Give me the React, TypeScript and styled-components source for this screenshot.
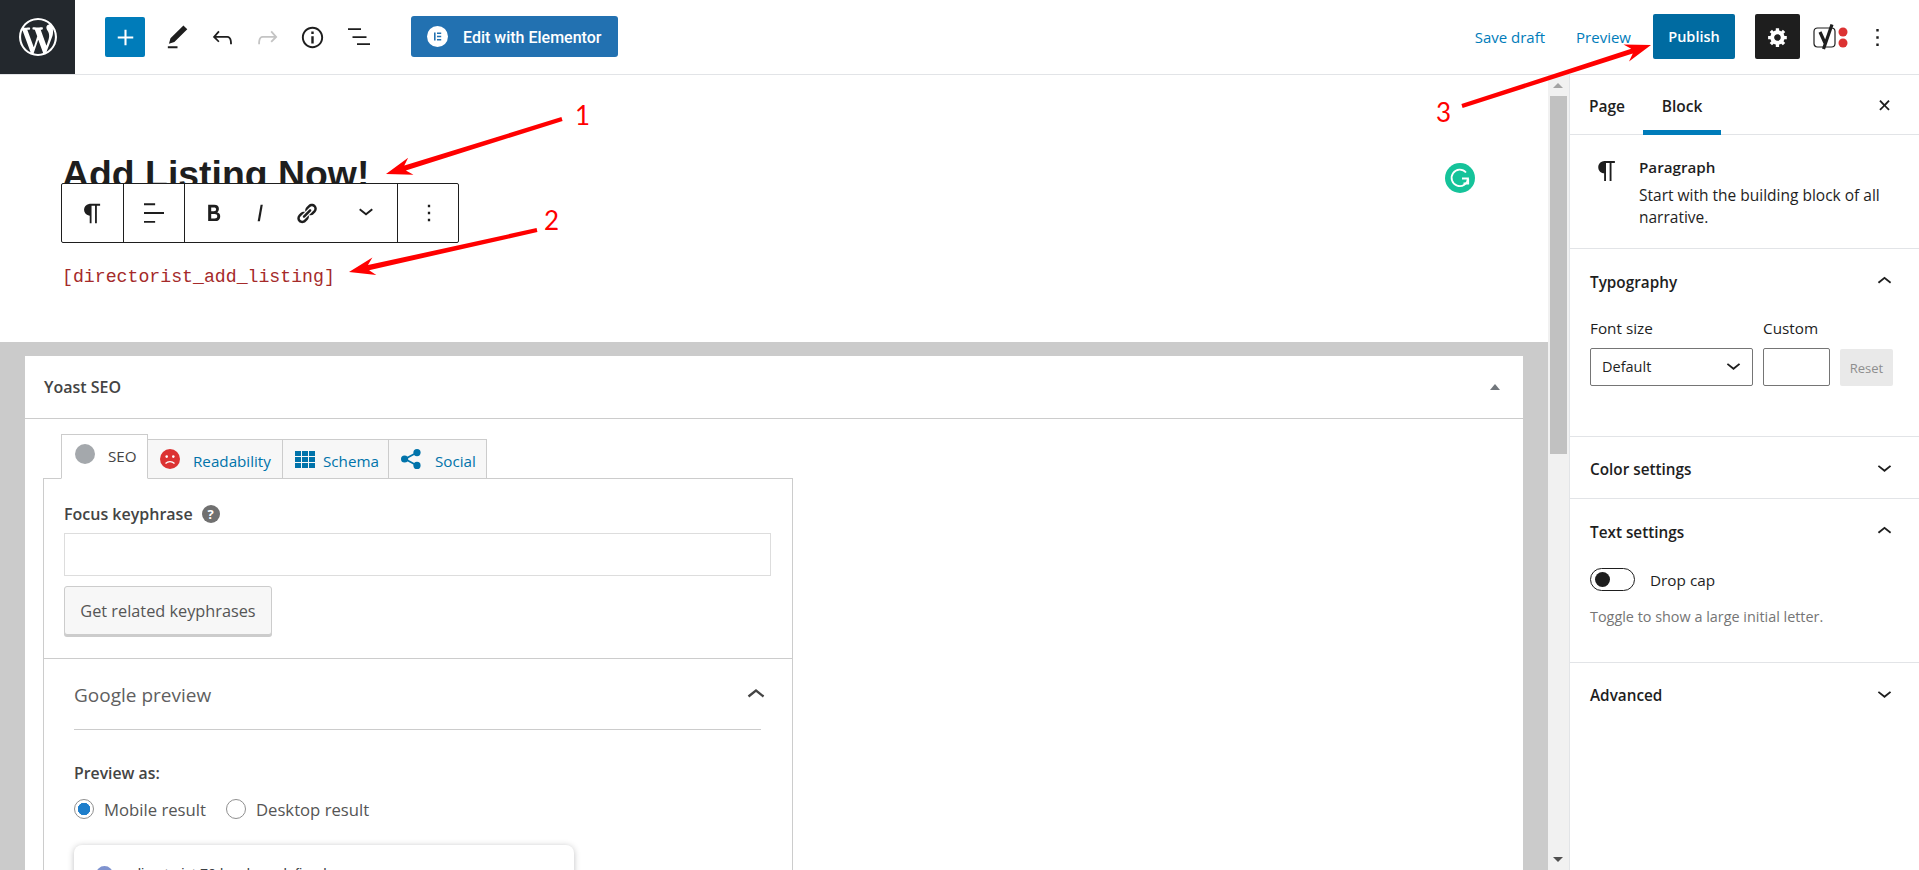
import React from "react";
import styled, { createGlobalStyle } from "styled-components";

const GlobalStyle = createGlobalStyle`
  html, body { margin: 0; padding: 0; background: #fff; }
  body { font-family: "Open Sans", "Noto Sans", sans-serif; color: #1e1e1e; }
  * { box-sizing: border-box; }
`;

const paths = {
  logo: "M20 10c0-5.51-4.49-10-10-10C4.48 0 0 4.49 0 10c0 5.52 4.48 10 10 10 5.51 0 10-4.48 10-10zM7.78 15.37L4.37 6.22c.55-.02 1.17-.08 1.17-.08.5-.06.44-1.13-.06-1.11 0 0-1.45.11-2.37.11-.18 0-.37 0-.58-.01C4.12 2.69 6.87 1.11 10 1.11c2.33 0 4.45.87 6.05 2.34-.68-.11-1.65.39-1.65 1.58 0 .74.45 1.36.9 2.1.35.61.55 1.36.55 2.46 0 1.49-1.4 5-1.4 5l-3.03-8.37c.54-.02.82-.17.82-.17.5-.05.44-1.25-.06-1.22 0 0-1.44.12-2.38.12-.87 0-2.33-.12-2.33-.12-.5-.03-.56 1.2-.06 1.22l.92.08 1.26 3.41zM17.41 10c.24-.64.74-1.87.43-4.25.7 1.29 1.05 2.71 1.05 4.25 0 3.29-1.73 6.24-4.4 7.78.97-2.59 1.94-5.2 2.92-7.78zM6.1 18.09C3.12 16.65 1.11 13.53 1.11 10c0-1.3.23-2.48.72-3.59C3.25 10.3 4.67 14.2 6.1 18.09zm4.03-6.63l2.58 6.98c-.86.29-1.76.45-2.71.45-.79 0-1.57-.11-2.29-.33.81-2.38 1.62-4.74 2.42-7.1z",
  plus: "M18 11.2h-5.2V6h-1.6v5.2H6v1.6h5.2V18h1.6v-5.2H18z",
  pencil: "M20.1 5.1L16.9 2 6.2 12.7l-1.3 4.4 4.5-1.3L20.1 5.1zM4 20.8h8v-1.5H4v1.5z",
  undo: "M18.3 11.7c-.6-.6-1.4-.9-2.3-.9H6.7l2.9-3.3-1.1-1-4.5 5L8.5 16l1-1-2.7-2.7H16c.5 0 .9.2 1.3.5 1 1 1 3.4 1 4.5v.3h1.5v-.2c0-1.5 0-4.3-1.5-5.7z",
  redo: "M15.6 6.5l-1.1 1 2.9 3.3H8c-.9 0-1.7.3-2.3.9-1.4 1.5-1.4 4.2-1.4 5.6v.2h1.5v-.3c0-1.1 0-3.5 1-4.5.3-.3.7-.5 1.3-.5h9.2L14.5 15l1.1 1.1 4.6-4.6-4.6-5z",
  info: "M12 3.2c-4.8 0-8.8 3.9-8.8 8.8 0 4.8 3.9 8.8 8.8 8.8 4.8 0 8.8-3.9 8.8-8.8 0-4.8-4-8.8-8.8-8.8zm0 16c-4 0-7.2-3.3-7.2-7.2C4.8 8 8 4.8 12 4.8s7.2 3.3 7.2 7.2c0 4-3.2 7.2-7.2 7.2zM11 17h2v-6h-2v6zm0-8h2V7h-2v2z",
  list: "M2 3.2h13V5H2zM6.5 11.2h14V13h-14zM11 18.2h13V20H11z",
  gear: "M18 12h-2.18c-.17.7-.44 1.35-.81 1.93l1.54 1.54-2.1 2.1-1.54-1.54c-.58.36-1.23.63-1.91.79V19H8v-2.18c-.68-.16-1.33-.43-1.91-.79l-1.54 1.54-2.12-2.12 1.54-1.54c-.36-.58-.63-1.23-.79-1.91H1V9.03h2.17c.16-.7.44-1.35.8-1.94L2.43 5.55l2.1-2.1 1.54 1.54c.58-.37 1.24-.64 1.93-.81V2h3v2.18c.68.16 1.33.43 1.91.79l1.54-1.54 2.12 2.12-1.54 1.54c.36.59.64 1.24.8 1.94H18V12zm-8.5 1.5c1.66 0 3-1.34 3-3s-1.34-3-3-3-3 1.34-3 3 1.34 3 3 3z",
  more: "M13 19h-2v-2h2v2zm0-6h-2v-2h2v2zm0-6h-2V5h2v2z",
  down: "M17.5 9.6L12 14l-5.5-4.4.9-1.2L12 12l4.5-3.6 1 1.2z",
  up: "M6.5 12.4L12 8l5.5 4.4-.9 1.2L12 10l-4.5 3.6-1-1.2z",
  close: "M13 11.9l3.3-3.4-1.1-1-3.2 3.3-3.2-3.3-1.1 1 3.3 3.4-3.3 3.3 1.1 1 3.2-3.3 3.2 3.3 1.1-1z",
  pilcrow: "M18.3 4H9.9v-.1l-.9.2c-2.3.4-4 2.4-4 4.8s1.7 4.4 4 4.8l.7.1V20h1.5V5.5h2.9V20h1.5V5.5h2.7V4z",
  align: "M4 19.8h8.9v-1.5H4v1.5zm8.9-15.6H4v1.5h8.9V4.2zm-8.9 7v1.5h16v-1.5H4z",
  bold: "M14.7 11.3c1-.6 1.5-1.6 1.5-3 0-2.3-1.3-3.4-4-3.4H7v14h5.8c1.4 0 2.5-.3 3.3-1 .8-.7 1.2-1.7 1.2-2.9.1-1.9-.8-3.1-2.6-3.7zm-5.1-4h2.3c.6 0 1.1.1 1.4.4.3.3.5.7.5 1.2s-.2 1-.5 1.2c-.3.3-.8.4-1.4.4H9.6V7.3zm4.6 9c-.4.3-1 .4-1.7.4H9.6v-3.9h2.9c.7 0 1.3.2 1.7.5.4.3.6.8.6 1.5s-.2 1.2-.6 1.5z",
  italic: "M12.5 5L10 19h1.9l2.5-14z",
  link: "M17.74 2.76c1.68 1.69 1.68 4.41 0 6.1l-1.53 1.52c-1.12 1.12-2.7 1.47-4.14 1.09l2.62-2.61.76-.77.76-.76c.84-.84.84-2.2 0-3.04-.84-.85-2.2-.85-3.04 0l-.77.76-3.38 3.38c-.37-1.44-.02-3.02 1.1-4.14l1.52-1.53c1.69-1.68 4.42-1.68 6.1 0zM8.59 13.43l5.34-5.34c.42-.42.42-1.1 0-1.52-.44-.43-1.13-.39-1.53 0l-5.33 5.34c-.42.42-.42 1.1 0 1.52.44.43 1.13.39 1.52 0zm-.76 2.29l4.14-4.15c.38 1.44.03 3.02-1.09 4.14l-1.52 1.53c-1.69 1.68-4.41 1.68-6.1 0-1.68-1.68-1.68-4.42 0-6.1l1.53-1.52c1.12-1.12 2.7-1.47 4.14-1.1l-4.14 4.15c-.85.84-.85 2.2 0 3.05.84.84 2.2.84 3.04 0z",
};

const Icon = ({ name, size = 29, box = 24, color = "currentColor" }: { name: keyof typeof paths; size?: number; box?: number; color?: string }) => (
  <svg width={size} height={size} viewBox={`0 0 ${box} ${box}`} fill={color} style={{ display: "block", flex: "none" }}>
    <path d={paths[name]} />
  </svg>
);

const Page = styled.div`
  position: relative;
  width: 1919px;
  height: 870px;
  overflow: hidden;
  display: flex;
  flex-direction: column;
  font-size: 13px;
`;

/* top bar */
const TopBar = styled.header`
  height: 75px;
  flex: none;
  display: flex;
  align-items: flex-start;
  border-bottom: 1px solid #e2e4e7;
`;
const LogoBox = styled.div`
  width: 75px;
  height: 74px;
  background: #23282d;
  color: #fff;
  display: flex;
  align-items: center;
  justify-content: center;
`;
const LeftTools = styled.div`
  height: 74px;
  display: flex;
  align-items: center;
  padding-left: 30px;
`;
const AddButton = styled.div`
  width: 40px;
  height: 40px;
  border-radius: 2px;
  background: #007cba;
  color: #fff;
  display: flex;
  align-items: center;
  justify-content: center;
  margin-right: 10px;
`;
const ToolIcon = styled.div<{ $muted?: boolean }>`
  width: 45px;
  height: 40px;
  display: flex;
  align-items: center;
  justify-content: center;
  color: ${(p) => (p.$muted ? "#c4c4c4" : "#1e1e1e")};
`;
const ElementorButton = styled.div`
  margin-left: 31px;
  margin-top: -2px;
  width: 207px;
  height: 41px;
  padding-left: 16px;
  border-radius: 3px;
  background: #2271b1;
  color: #fff;
  display: flex;
  align-items: center;
  gap: 15px;
  font-family: Roboto, sans-serif;
  font-size: 16px;
  font-weight: 500;
`;
const ElementorLabel = styled.span`
  margin-top: 3px;
`;
const RightTools = styled.div`
  height: 74px;
  margin-left: auto;
  display: flex;
  align-items: center;
`;
const TextLink = styled.span<{ $gap: number }>`
  color: #007cba;
  font-size: 15px;
  margin-right: ${(p) => p.$gap}px;
`;
const PublishButton = styled.div`
  width: 82px;
  height: 45px;
  margin-right: 20px;
  margin-top: -1px;
  border-radius: 2px;
  background: #006ba1;
  color: #fff;
  font-size: 14.5px;
  font-weight: 600;
  display: flex;
  align-items: center;
  justify-content: center;
`;
const SettingsButton = styled.div`
  width: 45px;
  height: 45px;
  margin-top: -1px;
  border-radius: 2px;
  background: #1e1e1e;
  color: #fff;
  display: flex;
  align-items: center;
  justify-content: center;
`;
const YoastSlot = styled.div`
  margin-left: 13px;
  width: 37px;
  height: 26px;
`;
const MoreSlot = styled.div`
  width: 29px;
  margin: 0 27px 0 13px;
`;

/* main area */
const Body = styled.div`
  flex: 1;
  min-height: 0;
  display: flex;
`;
const EditorColumn = styled.main`
  width: 1548px;
  flex: none;
  display: flex;
  flex-direction: column;
  background: #cbcbcb;
`;
const Canvas = styled.section`
  position: relative;
  height: 267px;
  flex: none;
  background: #fff;
  padding: 77px 0 0 62px;
`;
const PostTitle = styled.h1`
  margin: 0;
  font-family: "Liberation Sans", Arial, sans-serif;
  font-size: 37.4px;
  font-weight: 700;
  line-height: 44px;
  color: #1e1e1e;
`;
const BlockToolbar = styled.div`
  position: absolute;
  left: 61px;
  top: 108px;
  width: 398px;
  height: 60px;
  display: flex;
  background: #fff;
  border: 1px solid #1e1e1e;
  border-radius: 2px;
`;
const ToolbarGroup = styled.div<{ $width: number }>`
  width: ${(p) => p.$width}px;
  flex: none;
  display: flex;
  align-items: center;
  justify-content: center;
  border-right: 1px solid #1e1e1e;
  &:last-child { border-right: none; }
`;
const FormatGroup = styled(ToolbarGroup)`
  justify-content: flex-start;
  padding-left: 6px;
`;
const FormatButton = styled.div<{ $offset?: number }>`
  width: 46px;
  display: flex;
  justify-content: center;
  margin-left: ${(p) => p.$offset ?? 0}px;
`;
const Shortcode = styled.p`
  margin: 0;
  position: absolute;
  left: 62px;
  top: 190px;
  font-family: "Liberation Mono", monospace;
  font-size: 18.2px;
  line-height: 24px;
  color: #a52a2a;
`;
const GrammarlyBadge = styled.div`
  position: absolute;
  left: 1445px;
  top: 88px;
  width: 30px;
  height: 30px;
`;

/* yoast box */
const GreyGutter = styled.div`
  flex: 1;
  min-height: 0;
  padding: 14px 25px 0;
  overflow: hidden;
`;
const Metabox = styled.section`
  height: 600px;
  background: #fff;
`;
const MetaHeader = styled.div`
  height: 63px;
  padding: 0 19px;
  display: flex;
  align-items: center;
  justify-content: space-between;
  border-bottom: 1px solid #ccc;
  color: #444;
  font-size: 16px;
  font-weight: 600;
`;
const SortCaret = styled.span`
  width: 0;
  height: 0;
  margin-right: 4px;
  border-left: 5px solid transparent;
  border-right: 5px solid transparent;
  border-bottom: 6px solid #72777c;
`;
const TabRow = styled.div`
  height: 59px;
  padding-left: 37px;
  display: flex;
  align-items: flex-end;
`;
const Tab = styled.div<{ $active?: boolean; $width: number; $gap?: number }>`
  width: ${(p) => p.$width}px;
  height: ${(p) => (p.$active ? 45 : 40)}px;
  margin-bottom: -1px;
  margin-left: -1px;
  padding: ${(p) => (p.$active ? "0 0 5px 13px" : "0 0 0 12px")};
  display: flex;
  align-items: center;
  gap: ${(p) => p.$gap ?? 13}px;
  position: relative;
  z-index: ${(p) => (p.$active ? 1 : 0)};
  background: ${(p) => (p.$active ? "#fff" : "#f7f7f7")};
  border: 1px solid #ccc;
  border-bottom-color: ${(p) => (p.$active ? "#fff" : "#ccc")};
  color: ${(p) => (p.$active ? "#444" : "#0073aa")};
  font-size: 15.2px;
`;
const TabLabel = styled.span`
  margin-top: 3px;
`;
const TabPanel = styled.div`
  width: 750px;
  margin-left: 18px;
  height: 460px;
  border: 1px solid #ccc;
`;
const FocusSection = styled.div`
  height: 180px;
  padding: 24px 20px 0;
  border-bottom: 1px solid #ccc;
`;
const FieldLabel = styled.div`
  display: flex;
  align-items: center;
  gap: 9px;
  height: 22px;
  color: #444;
  font-size: 16px;
  font-weight: 600;
`;
const TextField = styled.div`
  width: 707px;
  height: 43px;
  margin-top: 8px;
  border: 1px solid #ddd;
`;
const GreyButton = styled.div`
  width: 208px;
  height: 49px;
  margin-top: 10px;
  display: flex;
  align-items: center;
  justify-content: center;
  background: #f7f7f7;
  border: 1px solid #ccc;
  border-radius: 3px;
  box-shadow: 0 2px 0 #ccc;
  color: #555;
  font-size: 16.3px;
`;
const PreviewSection = styled.div`
  padding: 0 31px 0 30px;
`;
const PreviewHeading = styled.div`
  height: 71px;
  padding: 2px 0 0;
  display: flex;
  align-items: center;
  justify-content: space-between;
  border-bottom: 1px solid #ccc;
  color: #5f5f5f;
  font-size: 19px;
`;
const HeadingChevron = styled.span`
  margin-right: -13px;
`;
const PreviewLabel = styled.div`
  margin-top: 32px;
  height: 22px;
  line-height: 22px;
  color: #444;
  font-size: 15.8px;
  font-weight: 600;
`;
const RadioRow = styled.div`
  margin-top: 13px;
  display: flex;
  align-items: center;
  height: 24px;
  color: #555;
  font-size: 16.7px;
`;
const Radio = styled.span<{ $on?: boolean; $gap: number }>`
  width: 20px;
  height: 20px;
  flex: none;
  margin-right: 10px;
  margin-left: ${(p) => p.$gap}px;
  border-radius: 50%;
  border: 1px solid #8f8f8f;
  background: ${(p) => (p.$on ? "radial-gradient(circle, #1e7ecb 0 6px, #fff 6.5px)" : "#fff")};
`;
const ResultCard = styled.div`
  width: 500px;
  height: 200px;
  margin-top: 24px;
  padding: 21px 22px;
  display: flex;
  align-items: flex-start;
  gap: 20px;
  border-radius: 8px;
  background: #fff;
  box-shadow: 0 1px 6px rgba(32, 33, 36, 0.28);
  font-family: "Liberation Sans", Arial, sans-serif;
  font-size: 14.5px;
  color: #3c4043;
`;
const Favicon = styled.span`
  width: 17px;
  height: 17px;
  border-radius: 50%;
  background: #7f93cf;
  flex: none;
`;

/* scrollbar */
const ScrollTrack = styled.div`
  width: 21px;
  flex: none;
  background: #f1f1f1;
  display: flex;
  flex-direction: column;
  align-items: center;
  padding: 8px 1px 0 0;
`;
const ScrollThumb = styled.div`
  width: 17px;
  height: 358px;
  margin-top: 8px;
  background: #c1c1c1;
`;
const ScrollArrow = styled.span<{ $down?: boolean }>`
  width: 0;
  height: 0;
  flex: none;
  border-left: 5px solid transparent;
  border-right: 5px solid transparent;
  ${(p) => (p.$down ? "border-top: 5px solid #505050; margin-top: auto; margin-bottom: 8px;" : "border-bottom: 5px solid #a3a3a3;")}
`;

/* right sidebar */
const Sidebar = styled.aside`
  flex: 1;
  border-left: 1px solid #e2e4e7;
  background: #fff;
`;
const SidebarTabs = styled.div`
  height: 60px;
  position: relative;
  display: flex;
  padding-left: 19px;
  border-bottom: 1px solid #e2e4e7;
`;
const SidebarTab = styled.div<{ $active?: boolean; $width: number }>`
  width: ${(p) => p.$width}px;
  height: 60px;
  padding-top: ${(p) => (p.$active ? 6 : 1)}px;
  display: flex;
  align-items: center;
  justify-content: ${(p) => (p.$active ? "center" : "flex-start")};
  font-size: 15.5px;
  font-weight: 600;
  border-bottom: ${(p) => (p.$active ? "5px solid #007cba" : "none")};
`;
const CloseSlot = styled.div`
  position: absolute;
  right: 20px;
  top: 16px;
`;
const BlockCard = styled.div`
  height: 114px;
  padding: 21px 20px 0 22px;
  display: flex;
  gap: 17px;
  border-bottom: 1px solid #e2e4e7;
`;
const BlockName = styled.div`
  font-size: 15.2px;
  font-weight: 600;
  line-height: 22px;
`;
const BlockText = styled.div`
  margin-top: 6px;
  font-size: 15.5px;
  line-height: 22px;
  white-space: nowrap;
`;
const Panel = styled.div<{ $height: number; $last?: boolean }>`
  height: ${(p) => p.$height}px;
  padding: 0 20px;
  border-bottom: ${(p) => (p.$last ? "none" : "1px solid #e2e4e7")};
`;
const PanelHead = styled.div<{ $height?: number }>`
  height: ${(p) => p.$height ?? 65}px;
  display: flex;
  align-items: center;
  justify-content: space-between;
  font-size: 15.3px;
  font-weight: 600;
`;
const FontRow = styled.div`
  display: flex;
  gap: 10px;
  margin-top: 4px;
`;
const FontField = styled.div`
  font-size: 15.3px;
  line-height: 20px;
`;
const SelectBox = styled.div`
  width: 163px;
  height: 38px;
  margin-top: 10px;
  padding: 0 4px 0 11px;
  display: flex;
  align-items: center;
  justify-content: space-between;
  border: 1px solid #757575;
  border-radius: 2px;
  font-size: 14.5px;
`;
const NumberBox = styled.div`
  width: 67px;
  height: 38px;
  margin-top: 10px;
  border: 1px solid #757575;
  border-radius: 2px;
`;
const ResetButton = styled.div`
  width: 53px;
  height: 37px;
  align-self: flex-end;
  display: flex;
  align-items: center;
  justify-content: center;
  border-radius: 2px;
  background: #e9e9e9;
  color: #8e8e8e;
  font-size: 13px;
`;
const ToggleRow = styled.div`
  display: flex;
  align-items: center;
  gap: 15px;
  margin-top: 4px;
  font-size: 15.3px;
`;
const ToggleTrack = styled.span`
  width: 45px;
  height: 23px;
  padding: 3px 0 0 4px;
  border: 1px solid #1e1e1e;
  border-radius: 12px;
`;
const ToggleKnob = styled.span`
  display: block;
  width: 15px;
  height: 15px;
  border-radius: 50%;
  background: #1e1e1e;
`;
const HelpText = styled.p`
  margin: 16px 0 0;
  color: #757575;
  font-size: 14.4px;
  line-height: 20px;
  white-space: nowrap;
`;

/* red annotations drawn over the shot */
const Overlay = styled.svg`
  position: absolute;
  left: 0;
  top: 0;
  pointer-events: none;
`;
const Callout = styled.span<{ $x: number; $y: number }>`
  position: absolute;
  left: ${(p) => p.$x}px;
  top: ${(p) => p.$y}px;
  color: #f00;
  font-family: Lato, sans-serif;
  font-size: 26px;
  line-height: 30px;
`;

const arrowPoints = (x1: number, y1: number, x2: number, y2: number) => {
  const len = Math.hypot(x2 - x1, y2 - y1);
  const ux = (x2 - x1) / len;
  const uy = (y2 - y1) / len;
  const at = (along: number, side: number) => `${x2 - ux * along - uy * side},${y2 - uy * along + ux * side}`;
  const tail = (side: number) => `${x1 - uy * side},${y1 + ux * side}`;
  return [tail(-2), at(20, -2.6), at(26, -9), `${x2},${y2}`, at(26, 9), at(20, 2.6), tail(2)].join(" ");
};

const YoastLogo = () => (
  <svg width="37" height="26" viewBox="0 0 37 26">
    <rect x="1" y="4" width="21" height="19" rx="3.5" fill="#fff" stroke="#1e1e1e" strokeWidth="1.2" />
    <path d="M7 8l5 11M19 0.5L10.5 25" fill="none" stroke="#1e1e1e" strokeWidth="3.2" />
    <circle cx="30" cy="8" r="4.5" fill="#dc3232" />
    <circle cx="30" cy="19" r="4.5" fill="#dc3232" />
  </svg>
);

const ElementorMark = () => (
  <svg width="21" height="21" viewBox="0 0 21 21">
    <circle cx="10.5" cy="10.5" r="10.5" fill="#fff" />
    <path d="M7 6.5h1.6v8H7zM10 6.5h4.2v1.5H10zM10 9.8h4.2v1.5H10zM10 13h4.2v1.5H10z" fill="#2271b1" />
  </svg>
);

const GrammarlyMark = () => (
  <svg width="30" height="30" viewBox="0 0 30 30">
    <circle cx="15" cy="15" r="15" fill="#15c39a" />
    <path d="M21 9.5A8.2 8.2 0 1 0 23 15.5h-6" fill="none" stroke="#fff" strokeWidth="1.8" />
    <path d="M18.5 20.5h4.7v-4.8" fill="none" stroke="#fff" strokeWidth="1.8" />
  </svg>
);

const SadFace = () => (
  <svg width="20" height="20" viewBox="0 0 20 20">
    <circle cx="10" cy="10" r="10" fill="#dc3232" />
    <circle cx="6.7" cy="7.6" r="1.3" fill="#fff" />
    <circle cx="13.3" cy="7.6" r="1.3" fill="#fff" />
    <path d="M5.5 14.5c2.5-2.6 6.5-2.6 9 0" fill="none" stroke="#fff" strokeWidth="1.3" />
  </svg>
);

const SchemaGrid = () => (
  <svg width="20" height="17" viewBox="0 0 20 17" fill="#0073aa">
    {[0, 6, 12].map((y) => [0, 7, 14].map((x) => <rect key={`${x}-${y}`} x={x} y={y} width="6" height="5" />))}
  </svg>
);

const ShareGlyph = () => (
  <svg width="20" height="20" viewBox="0 0 20 20">
    <path d="M16 3.5L4 10l12 6.5" fill="none" stroke="#0073aa" strokeWidth="1.8" />
    <circle cx="16" cy="3.6" r="3.6" fill="#0073aa" />
    <circle cx="3.6" cy="10" r="3.6" fill="#0073aa" />
    <circle cx="16" cy="16.4" r="3.6" fill="#0073aa" />
  </svg>
);

const GreyDot = styled.span`
  width: 20px;
  height: 20px;
  border-radius: 50%;
  background: #a4a8ac;
`;
const HelpDot = styled.span`
  width: 18px;
  height: 18px;
  border-radius: 50%;
  background: #707070;
  color: #fff;
  font-size: 13px;
  font-weight: 700;
  line-height: 18px;
  text-align: center;
`;

export default function App() {
  return (
    <Page>
      <GlobalStyle />
      <TopBar>
        <LogoBox>
          <Icon name="logo" size={38} box={20} />
        </LogoBox>
        <LeftTools>
          <AddButton><Icon name="plus" size={31} /></AddButton>
          <ToolIcon><Icon name="pencil" /></ToolIcon>
          <ToolIcon><Icon name="undo" /></ToolIcon>
          <ToolIcon $muted><Icon name="redo" /></ToolIcon>
          <ToolIcon><Icon name="info" /></ToolIcon>
          <ToolIcon><Icon name="list" size={24} /></ToolIcon>
          <ElementorButton>
            <ElementorMark />
            <ElementorLabel>Edit with Elementor</ElementorLabel>
          </ElementorButton>
        </LeftTools>
        <RightTools>
          <TextLink $gap={31}>Save draft</TextLink>
          <TextLink $gap={22}>Preview</TextLink>
          <PublishButton>Publish</PublishButton>
          <SettingsButton><Icon name="gear" size={22} box={20} /></SettingsButton>
          <YoastSlot><YoastLogo /></YoastSlot>
          <MoreSlot><Icon name="more" /></MoreSlot>
        </RightTools>
      </TopBar>

      <Body>
        <EditorColumn>
          <Canvas>
            <PostTitle>Add Listing Now!</PostTitle>
            <BlockToolbar>
              <ToolbarGroup $width={62}><Icon name="pilcrow" /></ToolbarGroup>
              <ToolbarGroup $width={61}><Icon name="align" size={30} /></ToolbarGroup>
              <FormatGroup $width={213}>
                <FormatButton><Icon name="bold" size={28} /></FormatButton>
                <FormatButton><Icon name="italic" size={28} /></FormatButton>
                <FormatButton><Icon name="link" size={23} box={20} /></FormatButton>
                <FormatButton $offset={14}><Icon name="down" size={30} /></FormatButton>
              </FormatGroup>
              <ToolbarGroup $width={61}><Icon name="more" size={28} /></ToolbarGroup>
            </BlockToolbar>
            <Shortcode>[directorist_add_listing]</Shortcode>
            <GrammarlyBadge><GrammarlyMark /></GrammarlyBadge>
          </Canvas>

          <GreyGutter>
            <Metabox>
              <MetaHeader>
                Yoast SEO
                <SortCaret />
              </MetaHeader>
              <TabRow>
                <Tab $active $width={87}><GreyDot /><TabLabel>SEO</TabLabel></Tab>
                <Tab $width={136}><SadFace /><TabLabel>Readability</TabLabel></Tab>
                <Tab $width={107} $gap={8}><SchemaGrid /><TabLabel>Schema</TabLabel></Tab>
                <Tab $width={99} $gap={14}><ShareGlyph /><TabLabel>Social</TabLabel></Tab>
              </TabRow>
              <TabPanel>
                <FocusSection>
                  <FieldLabel>Focus keyphrase <HelpDot>?</HelpDot></FieldLabel>
                  <TextField />
                  <GreyButton>Get related keyphrases</GreyButton>
                </FocusSection>
                <PreviewSection>
                  <PreviewHeading>
                    Google preview
                    <HeadingChevron><Icon name="up" size={36} color="#444" /></HeadingChevron>
                  </PreviewHeading>
                  <PreviewLabel>Preview as:</PreviewLabel>
                  <RadioRow>
                    <Radio $on $gap={0} />Mobile result
                    <Radio $gap={20} />Desktop result
                  </RadioRow>
                  <ResultCard>
                    <Favicon />
                    <span>directorist 70 local › undefined</span>
                  </ResultCard>
                </PreviewSection>
              </TabPanel>
            </Metabox>
          </GreyGutter>
        </EditorColumn>

        <ScrollTrack>
          <ScrollArrow />
          <ScrollThumb />
          <ScrollArrow $down />
        </ScrollTrack>

        <Sidebar>
          <SidebarTabs>
            <SidebarTab $width={54}>Page</SidebarTab>
            <SidebarTab $active $width={78}>Block</SidebarTab>
            <CloseSlot><Icon name="close" /></CloseSlot>
          </SidebarTabs>
          <BlockCard>
            <Icon name="pilcrow" size={30} />
            <div>
              <BlockName>Paragraph</BlockName>
              <BlockText>Start with the building block of all<br />narrative.</BlockText>
            </div>
          </BlockCard>
          <Panel $height={188}>
            <PanelHead>Typography<Icon name="up" /></PanelHead>
            <FontRow>
              <FontField>
                Font size
                <SelectBox>Default<Icon name="down" /></SelectBox>
              </FontField>
              <FontField>
                Custom
                <NumberBox />
              </FontField>
              <ResetButton>Reset</ResetButton>
            </FontRow>
          </Panel>
          <Panel $height={62}>
            <PanelHead $height={64}>Color settings<Icon name="down" /></PanelHead>
          </Panel>
          <Panel $height={164}>
            <PanelHead>Text settings<Icon name="up" /></PanelHead>
            <ToggleRow>
              <ToggleTrack><ToggleKnob /></ToggleTrack>
              Drop cap
            </ToggleRow>
            <HelpText>Toggle to show a large initial letter.</HelpText>
          </Panel>
          <Panel $height={66} $last>
            <PanelHead $height={64}>Advanced<Icon name="down" /></PanelHead>
          </Panel>
        </Sidebar>
      </Body>

      <Overlay width="1919" height="870" viewBox="0 0 1919 870">
        <polygon fill="#f00" points={arrowPoints(562, 119, 386, 174)} />
        <polygon fill="#f00" points={arrowPoints(537, 230, 349, 272)} />
        <polygon fill="#f00" points={arrowPoints(1462, 106, 1651, 45)} />
      </Overlay>
      <Callout $x={575} $y={100}>1</Callout>
      <Callout $x={544} $y={205}>2</Callout>
      <Callout $x={1436} $y={97}>3</Callout>
    </Page>
  );
}
